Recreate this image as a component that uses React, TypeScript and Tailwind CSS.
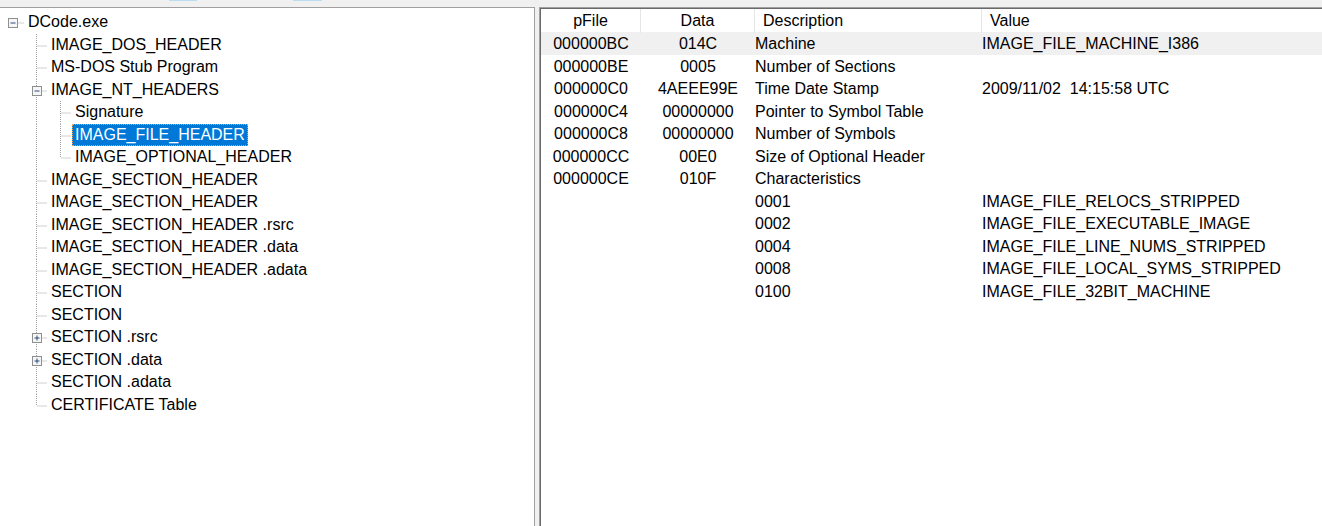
import React from "react";

type TreeRow = {
  level: 0 | 1 | 2;
  text: string;
  box?: "minus" | "plus";
  last?: boolean;
  selected?: boolean;
};

const treeRows: TreeRow[] = [
  { level: 0, text: "DCode.exe", box: "minus" },
  { level: 1, text: "IMAGE_DOS_HEADER" },
  { level: 1, text: "MS-DOS Stub Program" },
  { level: 1, text: "IMAGE_NT_HEADERS", box: "minus" },
  { level: 2, text: "Signature" },
  { level: 2, text: "IMAGE_FILE_HEADER", selected: true },
  { level: 2, text: "IMAGE_OPTIONAL_HEADER", last: true },
  { level: 1, text: "IMAGE_SECTION_HEADER" },
  { level: 1, text: "IMAGE_SECTION_HEADER" },
  { level: 1, text: "IMAGE_SECTION_HEADER .rsrc" },
  { level: 1, text: "IMAGE_SECTION_HEADER .data" },
  { level: 1, text: "IMAGE_SECTION_HEADER .adata" },
  { level: 1, text: "SECTION" },
  { level: 1, text: "SECTION" },
  { level: 1, text: "SECTION .rsrc", box: "plus" },
  { level: 1, text: "SECTION .data", box: "plus" },
  { level: 1, text: "SECTION .adata" },
  { level: 1, text: "CERTIFICATE Table", last: true },
];

const labelLeft = [25, 48, 72];
const lineX = [12.5, 36.5, 60.5];
const ROW_H = 22.5;
const MID = 11.5;

function Gutter({ row }: { row: TreeRow }) {
  const w = labelLeft[row.level];
  const x = lineX[row.level];
  const dot = { stroke: "#a0a0a0", strokeWidth: 1, strokeDasharray: "1 1" };
  return (
    <svg width={w} height={ROW_H} className="shrink-0 block">
      {row.level === 2 && <line x1={36.5} y1={0} x2={36.5} y2={ROW_H} {...dot} />}
      {row.level > 0 && (
        <line x1={x} y1={0} x2={x} y2={row.last ? MID : ROW_H} {...dot} />
      )}
      <line
        x1={row.box ? x + 5 : x + 1}
        y1={MID + 0.5}
        x2={w - 1}
        y2={MID + 0.5}
        {...dot}
      />
      {row.box && (
        <g>
          <rect x={x - 4} y={MID - 4} width={9} height={9} fill="#f6f6f6" stroke="#8e8f8f" />
          <line x1={x - 2} y1={MID + 0.5} x2={x + 3} y2={MID + 0.5} stroke="#2b4a7e" strokeWidth={1} />
          {row.box === "plus" && (
            <line x1={x + 0.5} y1={MID - 2} x2={x + 0.5} y2={MID + 3} stroke="#2b4a7e" strokeWidth={1} />
          )}
        </g>
      )}
    </svg>
  );
}

const tableRows: [string, string, string, string, boolean?][] = [
  ["000000BC", "014C", "Machine", "IMAGE_FILE_MACHINE_I386", true],
  ["000000BE", "0005", "Number of Sections", ""],
  ["000000C0", "4AEEE99E", "Time Date Stamp", "2009/11/02\u00a0\u00a014:15:58 UTC"],
  ["000000C4", "00000000", "Pointer to Symbol Table", ""],
  ["000000C8", "00000000", "Number of Symbols", ""],
  ["000000CC", "00E0", "Size of Optional Header", ""],
  ["000000CE", "010F", "Characteristics", ""],
  ["", "", "0001", "IMAGE_FILE_RELOCS_STRIPPED"],
  ["", "", "0002", "IMAGE_FILE_EXECUTABLE_IMAGE"],
  ["", "", "0004", "IMAGE_FILE_LINE_NUMS_STRIPPED"],
  ["", "", "0008", "IMAGE_FILE_LOCAL_SYMS_STRIPPED"],
  ["", "", "0100", "IMAGE_FILE_32BIT_MACHINE"],
];

export default function App() {
  return (
    <div
      className="w-[1322px] h-[526px] flex flex-col bg-[#f0f0f0] text-black text-[16px] overflow-hidden"
      style={{ fontFamily: '"Liberation Sans", Arial, sans-serif' }}
    >
      <div className="h-[7px] shrink-0 flex">
        <div className="ml-[169px] w-[28px] h-[1px] bg-[#bcdcf4]" />
        <div className="ml-[96px] w-[29px] h-[1px] bg-[#bcdcf4]" />
      </div>
      <div className="flex-1 flex min-h-0">
        <div className="w-[535px] shrink-0 bg-white border-t border-r border-[#a0a0a0] pt-[3px]">
          {treeRows.map((row, i) => (
            <div key={i} className="flex h-[22.5px] items-stretch">
              <Gutter row={row} />
              <div className="flex items-center">
                <span
                  className={
                    row.selected
                      ? "px-[2px] h-[22px] flex items-center bg-[#0078d7] text-white border border-dotted border-[#f0a050]"
                      : "px-[3px] h-[22px] flex items-center"
                  }
                >
                  {row.text}
                </span>
              </div>
            </div>
          ))}
        </div>
        <div className="w-[4px] shrink-0" />
        <div className="flex-1 bg-white border-t border-l border-[#a0a0a0]">
          <div className="h-full border-t border-l border-[#696969]">
            <div className="grid grid-cols-[100px_114px_227px_1fr] h-[23px]">
              <div className="flex items-center justify-center border-r border-[#e5e5e5]">pFile</div>
              <div className="flex items-center justify-center border-r border-[#e5e5e5]">Data</div>
              <div className="flex items-center pl-[8px] border-r border-[#e5e5e5]">Description</div>
              <div className="flex items-center pl-[8px]">Value</div>
            </div>
            {tableRows.map(([pFile, data, desc, value, hl], i) => (
              <div
                key={i}
                className={`grid grid-cols-[100px_114px_227px_1fr] h-[22.5px] items-center ${hl ? "bg-[#f0f0f0]" : ""}`}
              >
                <div className="text-center">{pFile}</div>
                <div className="text-center">{data}</div>
                <div className="whitespace-pre">{desc}</div>
                <div className="whitespace-pre">{value}</div>
              </div>
            ))}
          </div>
        </div>
      </div>
    </div>
  );
}
